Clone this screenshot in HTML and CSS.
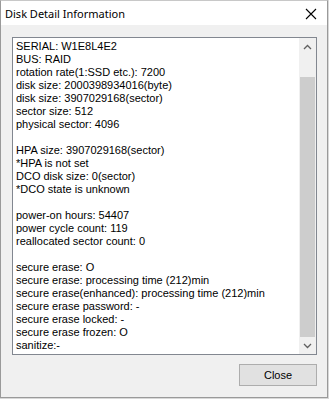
FILE: index.html
```html
<!DOCTYPE html>
<html lang="en">

<head>
    <meta charset="UTF-8">
    <meta name="viewport" content="width=device-width, initial-scale=1.0">
    <title>Disk Detail Information</title>
    <link rel="stylesheet" href="styles.css">
</head>

<body>

    <div class="window">
        <div class="titlebar">
            <div class="title">Disk Detail Information</div>
            <div class="close-x">
                <svg width="12" height="12" viewBox="0 0 12 12">
                    <path d="M1 1 L11 11 M11 1 L1 11" stroke="#000" stroke-width="1.1" fill="none" />
                </svg>
            </div>
        </div>

        <div class="dialog">
            <div class="edit">
                <div class="text">
                    <div>SERIAL: W1E8L4E2</div>
                    <div>BUS: RAID</div>
                    <div>rotation rate(1:SSD etc.): 7200</div>
                    <div>disk size: 2000398934016(byte)</div>
                    <div>disk size: 3907029168(sector)</div>
                    <div>sector size: 512</div>
                    <div>physical sector: 4096</div>
                    <div class="blank"></div>
                    <div>HPA size: 3907029168(sector)</div>
                    <div>*HPA is not set</div>
                    <div>DCO disk size: 0(sector)</div>
                    <div>*DCO state is unknown</div>
                    <div class="blank"></div>
                    <div>power-on hours: 54407</div>
                    <div>power cycle count: 119</div>
                    <div>reallocated sector count: 0</div>
                    <div class="blank"></div>
                    <div>secure erase: O</div>
                    <div>secure erase: processing time (212)min</div>
                    <div>secure erase(enhanced): processing time (212)min</div>
                    <div>secure erase password: -</div>
                    <div>secure erase locked: -</div>
                    <div>secure erase frozen: O</div>
                    <div>sanitize:-</div>
                </div>
                <div class="scrollbar">
                    <div class="arrow">
                        <svg width="9" height="6" viewBox="0 0 9 6">
                            <path d="M1 5 L4.5 1.5 L8 5" stroke="#606060" stroke-width="1.3" fill="none" />
                        </svg>
                    </div>
                    <div class="track">
                        <div class="thumb"></div>
                    </div>
                    <div class="arrow">
                        <svg width="9" height="6" viewBox="0 0 9 6">
                            <path d="M1 1 L4.5 4.5 L8 1" stroke="#606060" stroke-width="1.3" fill="none" />
                        </svg>
                    </div>
                </div>
            </div>
            <div class="footer">
                <button class="btn">Close</button>
            </div>
        </div>
    </div>

</body>

</html>
```

FILE: styles.css
```css
html,
body {
    margin: 0;
    padding: 0;
}

body {
    background-color: #d8d8d8;
    width: 329px;
    height: 399px;
}

.window {
    box-sizing: border-box;
    width: 328px;
    height: 398px;
    border: 1px solid #9a9a9a;
    border-top-color: #c8c8c8;
    display: flex;
    flex-direction: column;
    background-color: #f0f0f0;
}

.titlebar {
    height: 24px;
    background-color: #fff;
    display: flex;
    align-items: center;
    justify-content: space-between;
}

.title {
    padding-left: 4px;
    padding-top: 1px;
    font-family: "Noto Sans", "Open Sans", sans-serif;
    font-size: 11px;
    color: #000;
}

.close-x {
    width: 30px;
    display: flex;
    justify-content: center;
    padding-top: 2px;
    margin-right: 1px;
}

.dialog {
    flex: 1;
    display: flex;
    flex-direction: column;
    padding: 12px 10px 11px 11px;
    font-family: "Liberation Sans", Arial, sans-serif;
    font-size: 11px;
}

.edit {
    flex: 1;
    display: flex;
    border: 1px solid #828790;
    background-color: #fff;
    min-height: 0;
}

.text {
    flex: 1;
    padding: 2px 3px;
    line-height: 13px;
    color: #000;
    overflow: hidden;
    white-space: nowrap;
}

.text .blank {
    height: 13px;
}

.scrollbar {
    width: 17px;
    display: flex;
    flex-direction: column;
    background-color: #f0f0f0;
}

.scrollbar .arrow {
    height: 17px;
    display: flex;
    align-items: center;
    justify-content: center;
}

.scrollbar .track {
    flex: 1;
    display: flex;
    flex-direction: column;
    padding: 0 1px;
}

.scrollbar .thumb {
    flex: 1;
    margin-top: 22px;
    background-color: #cdcdcd;
}

.footer {
    display: flex;
    justify-content: flex-end;
    margin-top: 9px;
}

.btn {
    width: 78px;
    height: 22px;
    border: 1px solid #adadad;
    background-color: #e1e1e1;
    font-family: "Liberation Sans", Arial, sans-serif;
    font-size: 11px;
    color: #000;
    padding: 0;
    margin: 0;
}
```
